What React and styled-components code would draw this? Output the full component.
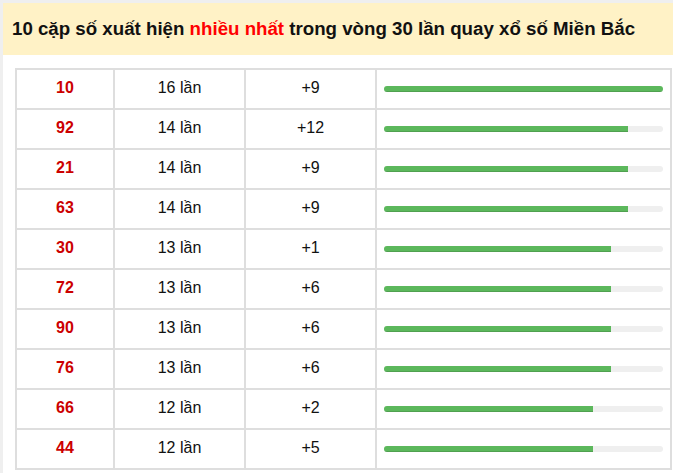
import React from "react";
import styled, { createGlobalStyle } from "styled-components";

const Global = createGlobalStyle`
  html, body { margin: 0; padding: 0; background: #efefef; overflow: hidden; }
  body { font-family: "Liberation Sans", Arial, sans-serif; }
`;

const Wrap = styled.div`
  margin: 3px 0 0 3px;
  width: 690px;
  height: 480px;
  background: #fff;
`;

const Header = styled.div`
  height: 52px;
  background: #fff2c6;
  display: flex;
  align-items: center;
  padding-left: 9px;
  padding-bottom: 1px;
  box-sizing: border-box;
  font-size: 18.7px;
  font-weight: bold;
  color: #111;
  white-space: nowrap;
`;

const Hot = styled.span`
  color: #ff0000;
`;

const Table = styled.table`
  margin: 13px 0 0 12px;
  width: 657px;
  border-collapse: collapse;
  table-layout: fixed;
  border: 2px solid #dedede;
`;

const Cell = styled.td`
  border: 2px solid #dedede;
  height: 36px;
  padding: 0 8px 2px;
  text-align: center;
  vertical-align: middle;
  font-size: 16px;
  color: #111;
  line-height: 34px;
`;

const NumCell = styled(Cell)`
  color: #cc0000;
  font-weight: bold;
`;

const BarCell = styled(Cell)`
  padding: 0 7px 0 7px;
`;

const Track = styled.div`
  height: 6px;
  margin-top: -1px;
  background: #efefef;
  border-radius: 3px;
  overflow: hidden;
`;

const Fill = styled.div`
  height: 100%;
  background: #5cb85c;
  box-shadow: inset 0 -1px 0 rgba(0, 0, 0, 0.12);
`;

const rows = [
  ["10", 16, 9],
  ["92", 14, 12],
  ["21", 14, 9],
  ["63", 14, 9],
  ["30", 13, 1],
  ["72", 13, 6],
  ["90", 13, 6],
  ["76", 13, 6],
  ["66", 12, 2],
  ["44", 12, 5],
];

export default function App() {
  return (
    <>
      <Global />
      <Wrap>
        <Header>
          10 cặp số xuất hiện&nbsp;<Hot>nhiều nhất</Hot>&nbsp;trong vòng 30 lần quay xổ số Miền Bắc
        </Header>
        <Table>
          <colgroup>
            <col style={{ width: 98 }} />
            <col style={{ width: 131 }} />
            <col style={{ width: 131 }} />
            <col />
          </colgroup>
          <tbody>
            {rows.map(([n, c, d]) => (
              <tr key={n}>
                <NumCell>{n}</NumCell>
                <Cell>{c} lần</Cell>
                <Cell>+{d}</Cell>
                <BarCell>
                  <Track>
                    <Fill style={{ width: `${(c / 16) * 100}%` }} />
                  </Track>
                </BarCell>
              </tr>
            ))}
          </tbody>
        </Table>
      </Wrap>
    </>
  );
}
